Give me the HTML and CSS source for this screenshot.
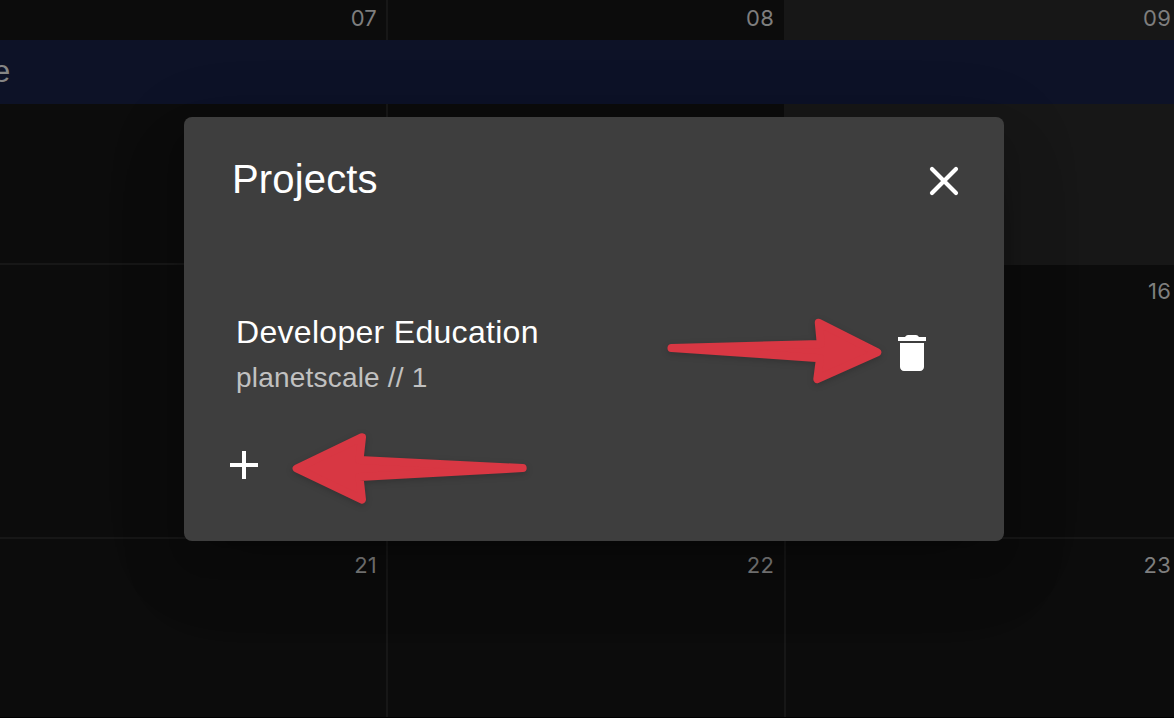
FILE: index.html
```
<!DOCTYPE html>
<html lang="en">
<head>
<meta charset="utf-8">
<title>Projects</title>
<link rel="stylesheet" href="styles.css">
</head>
<body>
<main class="calendar">
  <div class="day"><span class="num">07</span></div>
  <div class="day"><span class="num">08</span></div>
  <div class="day weekend"><span class="num">09</span></div>
  <div class="day"></div>
  <div class="day"></div>
  <div class="day"><span class="num">16</span></div>
  <div class="day"><span class="num">21</span></div>
  <div class="day"><span class="num">22</span></div>
  <div class="day"><span class="num">23</span></div>
  <div class="event">e</div>
</main>
<section class="dialog" role="dialog" aria-labelledby="title">
  <header class="dialog-head">
    <h1 class="title" id="title">Projects</h1>
    <button class="icon-button" aria-label="Close"><svg class="icon close" viewBox="0 0 24 24"><path d="M6 6 18 18M18 6 6 18"/></svg></button>
  </header>
  <div class="project">
    <div class="project-text">
      <div class="name">Developer Education</div>
      <div class="detail">planetscale // 1</div>
    </div>
    <button class="icon-button" aria-label="Delete"><svg class="icon" viewBox="0 0 24 24"><path d="M6 19c0 1.100.9 2 2 2h8c1.100 0 2-.9 2-2V7H6v12zM19 4h-3.500l-.7-.7q-.3-.3-.8-.3h-4q-.5 0-.8.300l-.7.700H5v2h14V4z"/></svg></button>
  </div>
  <button class="icon-button add" aria-label="Add"><svg class="icon" viewBox="0 0 24 24"><path d="M19 13h-6v6h-2v-6H5v-2h6V5h2v6h6v2z"/></svg></button>
</section>
<svg class="arrows" viewBox="0 0 1174 718" aria-hidden="true">
  <path d="M671.500 347.900 820.800 344 818.800 322.800 877.300 352.400 817.300 379.100 820 358.200z"/>
  <path d="M522.700 468.100 359.500 460 362 437.200 296.600 468.500 362 499.600 359.500 477z"/>
</svg>
</body>
</html>
```

FILE: styles.css
```
body {
  margin: 0;
  width: 1174px;
  height: 718px;
  overflow: hidden;
  background: #000;
  font-family: "Liberation Sans", Arial, sans-serif;
}

.calendar {
  display: grid;
  position: relative;
  grid-template-columns: 388px 398px 388px;
  grid-template-rows: 265px 274px 178px;
  height: 717px;
}

.day {
  box-sizing: border-box;
  border-right: 2px solid #171717;
  border-bottom: 2px solid #171717;
  background: #0c0c0c;
  text-align: right;
  padding: 5px 9px 0 0;
}

.day:nth-child(3n+2) {
  padding-right: 10px;
}

.day:nth-child(3n) {
  border-right: 0;
  padding-right: 3px;
}

.day:nth-child(n+4) {
  padding-top: 13px;
}

.day:nth-child(n+7) {
  border-bottom: 0;
}

.weekend {
  background: #171717;
}

.num {
  font: 22px/26px Inter, sans-serif;
  letter-spacing: 0.2px;
  color: #7e7e7e;
}

.event {
  position: absolute;
  top: 40px;
  left: 0;
  right: 0;
  height: 64px;
  box-sizing: border-box;
  background: #0d1227;
  color: #858585;
  font: 31px/64px "Liberation Sans", sans-serif;
  text-indent: -7px;
}

.dialog {
  position: absolute;
  left: 184px;
  top: 117px;
  width: 820px;
  height: 424px;
  box-sizing: border-box;
  padding: 32px 0 0 48px;
  border-radius: 8px;
  background: #3e3e3e;
  color: #fff;
  box-shadow: 0 22px 30px -14px rgba(0, 0, 0, .2),
    0 40px 70px 0 rgba(0, 0, 0, .12),
    0 18px 80px 6px rgba(0, 0, 0, .1);
}

.dialog-head {
  display: flex;
  justify-content: space-between;
  align-items: center;
  height: 64px;
  padding-right: 36px;
}

.title {
  margin: 0;
  font-size: 40px;
  line-height: 60px;
  padding-bottom: 4px;
  font-weight: 400;
  letter-spacing: .15px;
}

.icon-button {
  display: block;
  border: 0;
  padding: 0;
  background: none;
  width: 48px;
  height: 48px;
}

.icon {
  display: block;
  width: 48px;
  height: 48px;
  fill: #fff;
}

.close {
  fill: none;
  stroke: #fff;
  stroke-width: 2.1;
  stroke-linecap: round;
}

.project {
  display: flex;
  justify-content: space-between;
  align-items: center;
  margin-top: 92px;
  padding: 0 68px 0 4px;
  height: 96px;
}

.project-text {
  padding-top: 2px;
}

.name {
  font-size: 32px;
  line-height: 48px;
  letter-spacing: .3px;
}

.detail {
  font-size: 28px;
  line-height: 44px;
  letter-spacing: .2px;
  color: #c1c1c1;
}

.add {
  margin: 40px 0 0 -12px;
}

.arrows {
  position: absolute;
  left: 0;
  top: 0;
  width: 1174px;
  height: 718px;
  fill: #d83743;
  stroke: #d83743;
  stroke-width: 8px;
  stroke-linejoin: round;
  filter: drop-shadow(0 2px 3px rgba(0, 0, 0, .18));
}
```
